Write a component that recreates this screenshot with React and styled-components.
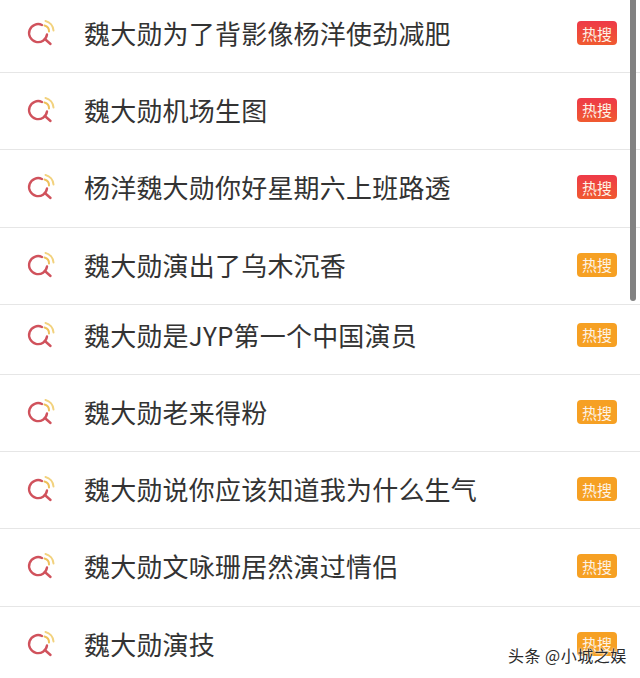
import React from "react";
import styled, { createGlobalStyle } from "styled-components";

const rows = [
  { text: "魏大勋为了背影像杨洋使劲减肥", height: 73, lift: 6, hot: true },
  { text: "魏大勋机场生图", height: 77, lift: 3, hot: true },
  { text: "杨洋魏大勋你好星期六上班路透", height: 78, lift: 3, hot: true },
  { text: "魏大勋演出了乌木沉香", height: 77, lift: 3 },
  { text: "魏大勋是JYP第一个中国演员", height: 70, lift: 10 },
  { text: "魏大勋老来得粉", height: 77, lift: 2 },
  { text: "魏大勋说你应该知道我为什么生气", height: 77, lift: 2 },
  { text: "魏大勋文咏珊居然演过情侣", height: 78, lift: 3 },
  { text: "魏大勋演技", height: 73, lift: 0, last: true },
];

function SearchIcon() {
  return (
    <svg width="30" height="30" viewBox="0 0 30 30" fill="none" strokeLinecap="round">
      <path d="M16 6A9 9 0 1 0 21 15.5" stroke="#d0525c" strokeWidth="2.4" />
      <path d="M20 21L24.5 25" stroke="#d0525c" strokeWidth="2.4" />
      <path d="M19.5 2A10.5 10.5 0 0 1 27.5 11.5" stroke="#f2d27e" strokeWidth="2" />
      <path d="M18.5 6.5A6 6 0 0 1 23 12.5" stroke="#eec05a" strokeWidth="2" />
    </svg>
  );
}

export default function App() {
  return (
    <Page>
      <GlobalStyle />
      <List>
        {rows.map((row) => (
          <Row key={row.text} $height={row.height} $lift={row.lift} $last={row.last}>
            <IconSlot>
              <SearchIcon />
            </IconSlot>
            <Title>{row.text}</Title>
            <Badge $hot={row.hot}>热搜</Badge>
          </Row>
        ))}
      </List>
      <Scrollbar />
      <Watermark>头条 @小城之娱</Watermark>
    </Page>
  );
}

const GlobalStyle = createGlobalStyle`
  html, body {
    margin: 0;
    padding: 0;
    background: #fff;
  }
`;

const Page = styled.div`
  position: relative;
  width: 640px;
  height: 678px;
  overflow: hidden;
  background: #fff;
  font-family: "Noto Sans CJK SC", "Liberation Sans", sans-serif;
`;

const List = styled.div`
  display: flex;
  flex-direction: column;
`;

const Row = styled.div`
  box-sizing: border-box;
  height: ${(p) => p.$height}px;
  flex: none;
  padding: 0 23px ${(p) => p.$lift}px 26px;
  display: flex;
  align-items: center;
  border-bottom: ${(p) => (p.$last ? "none" : "1px solid #e6e6e6")};
`;

const IconSlot = styled.div`
  box-sizing: border-box;
  width: 58px;
  height: 32px;
  padding-top: 2px;
  flex: none;
`;

const Title = styled.div`
  flex: 1;
  font-size: 26px;
  letter-spacing: 0.2px;
  line-height: 34px;
  color: #333;
`;

const Badge = styled.div`
  width: 40px;
  height: 24px;
  flex: none;
  border-radius: 4px;
  display: flex;
  align-items: center;
  justify-content: center;
  font-size: 15px;
  color: #fdf3e6;
  background: ${(p) =>
    p.$hot ? "linear-gradient(#ee3a48, #f05a30)" : "#f6a023"};
`;

const Scrollbar = styled.div`
  position: absolute;
  top: 0;
  right: 4px;
  width: 6px;
  height: 301px;
  border-radius: 0 0 3px 3px;
  background: #828282;
`;

const Watermark = styled.div`
  position: absolute;
  left: 508px;
  top: 645px;
  font-size: 16px;
  letter-spacing: 0.5px;
  line-height: 20px;
  color: #2b2b2b;
  text-shadow: 0 0 2px #fff, 0 0 2px #fff;
`;
